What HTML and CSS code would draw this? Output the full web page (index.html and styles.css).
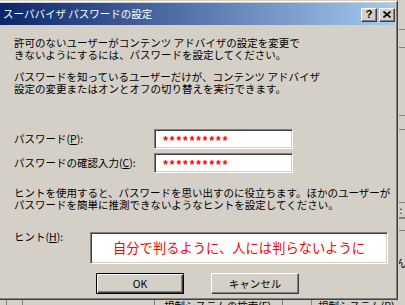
FILE: index.html
```html
<!DOCTYPE html>
<html>
<head>
    <meta charset="UTF-8">
    <title>スーパバイザ パスワードの設定</title>
    <link rel="stylesheet" href="styles.css">
</head>
<body>
    <div class="desk">
        <div class="top">
            <div class="dialog">
                <div class="titlebar">
                    <span class="title">スーパバイザ パスワードの設定</span>
                    <div class="caption-buttons">
                        <span class="cap-btn help">?</span>
                        <span class="cap-btn close">
                            <svg width="8" height="7" viewBox="0 0 8 7">
                                <path d="M0.5 0.5 L7.5 6.5 M7.5 0.5 L0.5 6.5" stroke="#000" stroke-width="1.6" fill="none"/>
                            </svg>
                        </span>
                    </div>
                </div>
                <div class="content">
                    <p class="para">許可のないユーザーがコンテンツ アドバイザの設定を変更で<br>きないようにするには、パスワードを設定してください。</p>
                    <p class="para p2">パスワードを知っているユーザーだけが、コンテンツ アドバイザ<br>設定の変更またはオンとオフの切り替えを実行できます。</p>
                    <div class="field first">
                        <span class="label">パスワード(<u>P</u>):</span>
                        <div class="edit pw">**********</div>
                    </div>
                    <div class="field second">
                        <span class="label">パスワードの確認入力(<u>C</u>):</span>
                        <div class="edit pw">**********</div>
                    </div>
                    <p class="para p3">ヒントを使用すると、パスワードを思い出すのに役立ちます。ほかのユーザーが<br>パスワードを簡単に推測できないようなヒントを設定してください。</p>
                    <div class="field hint-row">
                        <span class="label short">ヒント(<u>H</u>):</span>
                        <div class="edit hint">自分で判るように、人には判らないように</div>
                    </div>
                    <div class="buttons">
                        <span class="btn default">OK</span>
                        <span class="btn">キャンセル</span>
                    </div>
                </div>
            </div>
            <div class="side">
                <div class="seg" style="height: 29px"></div>
                <div class="seg line" style="height: 18px"></div>
                <div class="seg line" style="height: 68px"></div>
                <div class="seg line" style="height: 14px"></div>
                <div class="seg line" style="height: 73px"></div>
                <div class="seg line boxed" style="height: 16px">):</div>
                <div class="seg line" style="height: 12px"></div>
                <div class="seg line" style="height: 17px"></div>
                <div class="seg glyph" style="height: 50px">ん</div>
            </div>
        </div>
        <div class="bottom">
            <div class="cell" style="width: 7px"></div>
            <div class="cell" style="width: 16px"></div>
            <div class="cell" style="width: 132px"></div>
            <div class="cell txt" style="width: 128px">規制システムの検索(F)...</div>
            <div class="cell" style="width: 29px"></div>
            <div class="cell txt last">規制システム(R)...</div>
        </div>
    </div>
</body>
</html>
```

FILE: styles.css
```css
* {
    padding: 0;
    margin: 0;
    box-sizing: border-box;
}
body {
    background: #d4d0c8;
    font-family: "Noto Sans CJK JP", sans-serif;
    font-size: 10.5px;
    line-height: 12px;
    color: #000;
}
.desk {
    width: 405px;
    height: 305px;
    overflow: hidden;
    background: #d4d0c8;
}
.top {
    display: flex;
    height: 300px;
}
.dialog {
    flex: none;
    width: 402px;
    height: 300px;
    margin-left: -4px;
    padding: 2px;
    background: #d4d0c8;
    border: 1px solid;
    border-color: #d4d0c8 #404040 #404040 #d4d0c8;
    box-shadow: inset 1px 1px #fff, inset -1px -1px #808080;
    display: flex;
    flex-direction: column;
}
.titlebar {
    height: 22px;
    display: flex;
    align-items: center;
    justify-content: space-between;
    padding: 0 0 0 4px;
    background: linear-gradient(to right, #0a246a, #a6caf0);
}
.title {
    color: #fff;
    white-space: nowrap;
}
.caption-buttons {
    display: flex;
    gap: 2px;
    padding-top: 1px;
}
.cap-btn {
    width: 16px;
    height: 14px;
    background: #d4d0c8;
    border: 1px solid;
    border-color: #fff #404040 #404040 #fff;
    box-shadow: inset -1px -1px #808080;
    display: flex;
    align-items: center;
    justify-content: center;
}
.help {
    font-family: "Liberation Sans", sans-serif;
    font-weight: bold;
    font-size: 11px;
    line-height: 11px;
}
.content {
    padding: 12px 0 0 15px;
}
.para {
    white-space: nowrap;
}
.p2 {
    margin-top: 10px;
}
.field {
    display: flex;
    align-items: center;
}
.first {
    margin-top: 34px;
}
.second {
    margin-top: 4px;
}
.label {
    width: 140px;
    white-space: nowrap;
}
.label.short {
    width: 76px;
    align-self: flex-start;
    margin-top: -1px;
}
.edit {
    background: #fff;
    border: 1px solid;
    border-color: #808080 #fff #fff #808080;
    box-shadow: inset 1px 1px #404040, inset -1px -1px #d4d0c8;
    color: #f00;
}
.pw {
    width: 139px;
    height: 20px;
    padding: 6px 0 0 7px;
    font-family: "Liberation Mono", monospace;
    font-weight: bold;
    font-size: 12px;
    line-height: 12px;
    letter-spacing: -0.6px;
}
.p3 {
    margin-top: 14px;
}
.hint-row {
    margin-top: 21px;
}
.hint {
    width: 298px;
    height: 32px;
    display: flex;
    align-items: center;
    justify-content: center;
    font-size: 13.3px;
    line-height: 16px;
    white-space: nowrap;
}
.buttons {
    display: flex;
    gap: 27px;
    margin: 9px 0 0 82px;
}
.btn {
    width: 88px;
    height: 21px;
    display: flex;
    align-items: center;
    justify-content: center;
    border: 1px solid;
    border-color: #fff #404040 #404040 #fff;
    box-shadow: inset -1px -1px #808080;
}
.btn.default {
    border: 1px solid #000;
    box-shadow: inset 1px 1px #fff, inset -1px -1px #404040, inset -2px -2px #808080;
}
.side {
    flex: 1;
    display: flex;
    flex-direction: column;
    overflow: hidden;
    border-left: 1px solid #d4d0c8;
}
.seg {
    flex: none;
    white-space: nowrap;
}
.line {
    border-top: 1px solid #808080;
}
.boxed {
    border-bottom: 1px solid #808080;
    font-size: 10px;
    line-height: 14px;
    margin-left: -3px;
}
.glyph {
    padding-top: 10px;
    margin-left: -3px;
}
.bottom {
    display: flex;
    height: 5px;
    overflow: hidden;
}
.cell {
    flex: none;
    height: 12px;
    border-right: 1px solid #808080;
    white-space: nowrap;
}
.cell.txt {
    padding-left: 9px;
}
.cell.last {
    flex: 1;
    padding-left: 6px;
    border-right: none;
}
```
